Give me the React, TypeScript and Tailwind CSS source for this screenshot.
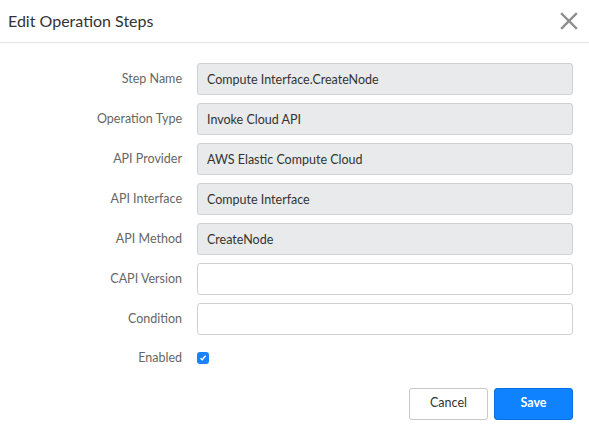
const fields = [
  { label: "Step Name", value: "Compute Interface.CreateNode", locked: true },
  { label: "Operation Type", value: "Invoke Cloud API", locked: true },
  { label: "API Provider", value: "AWS Elastic Compute Cloud", locked: true },
  { label: "API Interface", value: "Compute Interface", locked: true },
  { label: "API Method", value: "CreateNode", locked: true },
  { label: "CAPI Version", value: "", locked: false },
  { label: "Condition", value: "", locked: false },
];

const App = () => (
  <div
    className="h-[436px] w-[589px] bg-white text-[#333]"
    style={{ fontFamily: "Lato, 'Noto Sans', sans-serif" }}
  >
    <div className="flex h-[43px] items-center justify-between border-b border-[#e3e3e3] pl-2 pr-[11px]">
      <h2 className="text-[16px] leading-none text-[#333]">Edit Operation Steps</h2>
      <button className="text-[#8d8d8d]" aria-label="Close">
        <svg width="18" height="18" viewBox="0 0 18 18" stroke="currentColor" strokeWidth="2.4" strokeLinecap="square">
          <path d="M2 2 L16 16 M16 2 L2 16" />
        </svg>
      </button>
    </div>

    <form className="flex flex-col gap-2 pr-4 pt-5">
      {fields.map((f) => (
        <div key={f.label} className="flex items-center">
          <label className="w-[182px] text-right text-[12.5px] text-[#666]">{f.label}</label>
          <input
            readOnly
            value={f.value}
            className={`ml-[15px] h-8 flex-1 rounded-[3px] border border-[#cfd1d3] px-[9px] text-[12.5px] text-[#333] outline-none ${
              f.locked ? "bg-[#e9eaeb]" : "bg-white"
            }`}
          />
        </div>
      ))}
      <div className="mt-[6px] flex items-center">
        <label className="w-[182px] text-right text-[12.5px] text-[#666]">Enabled</label>
        <span className="ml-[15px] flex h-3 w-3 items-center justify-center rounded-[3px] bg-[#1a82fb]">
          <svg width="8" height="8" viewBox="0 0 8 8" fill="none" stroke="white" strokeWidth="1.4">
            <path d="M1.5 4.2 L3.2 5.8 L6.6 1.8" />
          </svg>
        </span>
      </div>
      <div className="mt-[12px] flex justify-end gap-[6px]">
        <button
          type="button"
          className="h-8 w-[79px] rounded-[3px] border border-[#c8c8c8] bg-white text-[12.5px] text-[#333]"
        >
          Cancel
        </button>
        <button
          type="button"
          className="h-8 w-[79px] rounded-[3px] border border-[#0a6fe0] bg-[#0f82ff] text-[12.5px] font-bold text-white"
        >
          Save
        </button>
      </div>
    </form>
  </div>
);

export default App;
